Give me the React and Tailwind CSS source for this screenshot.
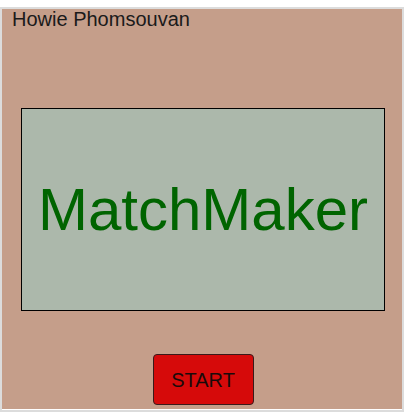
export default function App() {
  return (
    <div className="bg-white min-h-[416px] pt-[7px]" style={{ fontFamily: '"Liberation Sans", Arial, sans-serif' }}>
      <div className="w-[404px] border-2 border-[#dcdcdc] pb-[1px] bg-white">
        <div className="h-[400px] bg-[#c59e8a] flex flex-col">
          <p className="pl-[10px] text-[20px] leading-[21px] text-[#1a1a1a]">Howie Phomsouvan</p>
          <div className="ml-[19px] mt-[78px] w-[364px] h-[203px] border border-black bg-[#acb8ab] flex items-center justify-center">
            <span className="text-[60px] text-[#006400] leading-none">MatchMaker</span>
          </div>
          <div className="flex justify-center mt-[43px]">
            <button className="w-[101px] h-[51px] ml-[2px] bg-[#d60a0a] border border-[#3a1a1a] rounded-[4px] text-[20px] text-[#1a0a0a]">
              START
            </button>
          </div>
        </div>
      </div>
    </div>
  );
}
